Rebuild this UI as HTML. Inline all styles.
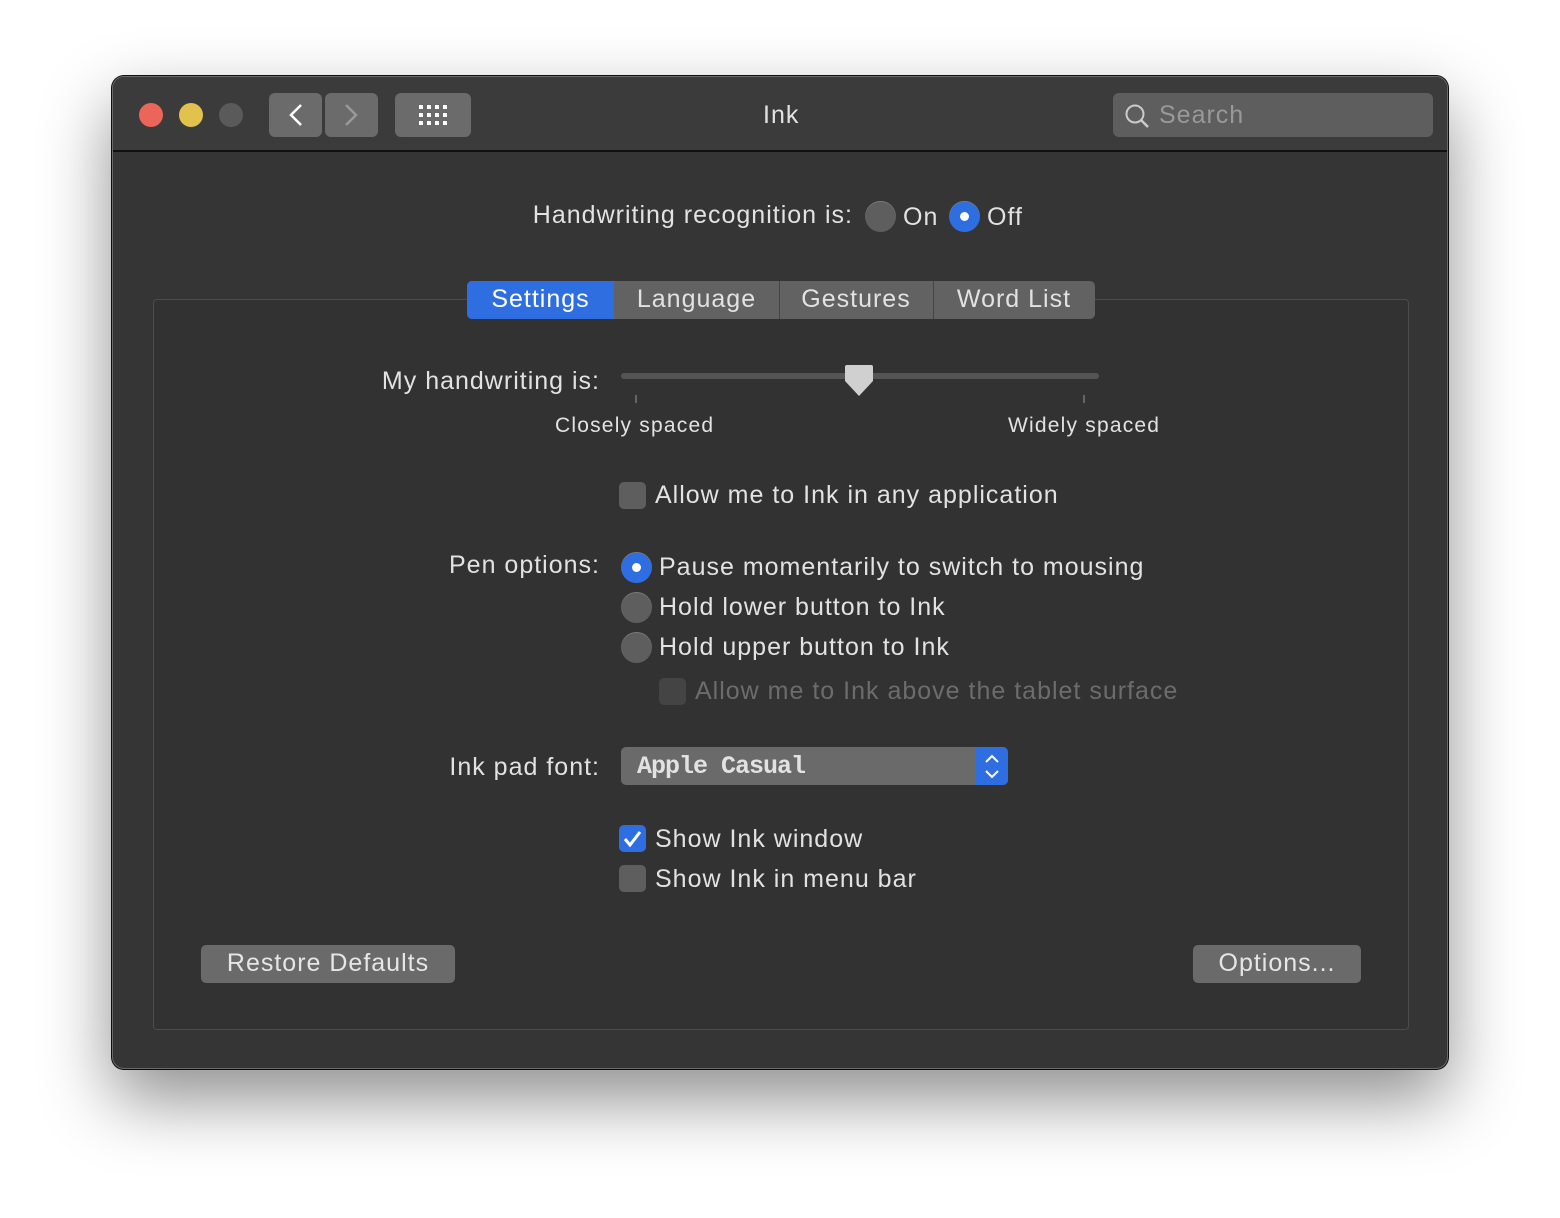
<!DOCTYPE html>
<html><head><meta charset="utf-8"><style>
*{box-sizing:border-box;margin:0;padding:0}
body{width:1560px;height:1218px;background:#fff;position:relative;font-family:"Liberation Sans",sans-serif;overflow:hidden}
.a{position:absolute}
.win{left:112px;top:76px;width:1336px;height:993px;background:#353535;border-radius:12px;border:1px solid #6a6a6a;box-shadow:0 30px 70px rgba(0,0,0,.45),0 0 0 1px #111;overflow:hidden}
.tb{left:0;top:0;width:100%;height:75px;background:#3b3b3b;border-bottom:2px solid #111}
.t{color:#e2e2e2;font-size:25px;white-space:nowrap;letter-spacing:1px}
.r{text-align:right}
.dot{width:24px;height:24px;border-radius:50%}
.btn{background:#6b6b6b;border-radius:6px}
.rad{width:31px;height:31px;border-radius:50%;background:#5e5e5e;box-shadow:inset 0 1px 0 #777}
.rad.on{background:#2f6ee0}
.rad.on::after{content:"";position:absolute;left:11px;top:11px;width:9px;height:9px;border-radius:50%;background:#fff}
.cb{width:27px;height:27px;border-radius:5px;background:#5e5e5e}
.pb{background:#6a6a6a;border-radius:5px;color:#e6e6e6;font-size:25px;text-align:center;letter-spacing:1px}
</style></head><body>
<div class="a win">
 <div class="a tb">
  <div class="a dot" style="left:26px;top:26px;background:#ec6559"></div>
  <div class="a dot" style="left:66px;top:26px;background:#e0c24c"></div>
  <div class="a dot" style="left:106px;top:26px;background:#5a5a5a"></div>
  <div class="a btn" style="left:156px;top:16px;width:53px;height:44px"><svg width="53" height="44"><path d="M32 12 L22 22 L32 32" stroke="#fff" stroke-width="2.5" fill="none"/></svg></div>
  <div class="a btn" style="left:212px;top:16px;width:53px;height:44px"><svg width="53" height="44"><path d="M21 12 L31 22 L21 32" stroke="#999" stroke-width="2.5" fill="none"/></svg></div>
  <div class="a btn" style="left:282px;top:16px;width:76px;height:44px"><svg width="76" height="44"><g fill="#fff"><rect x="24" y="12" width="4" height="4"/><rect x="32" y="12" width="4" height="4"/><rect x="40" y="12" width="4" height="4"/><rect x="48" y="12" width="4" height="4"/><rect x="24" y="20" width="4" height="4"/><rect x="32" y="20" width="4" height="4"/><rect x="40" y="20" width="4" height="4"/><rect x="48" y="20" width="4" height="4"/><rect x="24" y="28" width="4" height="4"/><rect x="32" y="28" width="4" height="4"/><rect x="40" y="28" width="4" height="4"/><rect x="48" y="28" width="4" height="4"/></g></svg></div>
  <div class="a t" style="left:650px;top:24px">Ink</div>
  <div class="a btn" style="left:1000px;top:16px;width:320px;height:44px;background:#5e5e5e"><svg class="a" style="left:10px;top:9px" width="28" height="28"><circle cx="12" cy="12" r="8.5" stroke="#ccc" stroke-width="2" fill="none"/><path d="M18 18 L25 25" stroke="#ccc" stroke-width="2.5"/></svg><div class="a t" style="left:46px;top:8px;color:#999">Search</div></div>
 </div>
 <div class="a t r" style="right:594px;top:124px">Handwriting recognition is:</div>
 <div class="a rad" style="left:752px;top:124px"></div><div class="a t" style="left:790px;top:126px">On</div>
 <div class="a rad on" style="left:836px;top:124px"></div><div class="a t" style="left:874px;top:126px">Off</div>
 <div class="a" style="left:40px;top:222px;width:1256px;height:731px;border:1px solid #4c4c4c;border-radius:4px;background:#323232"></div>
 <div class="a" style="left:354px;top:204px;width:628px;height:38px;background:#626262;border-radius:5px;overflow:hidden">
  <div class="a" style="left:0;top:0;width:147px;height:38px;background:#2f6ee0"></div>
  <div class="a" style="left:312px;top:0;width:1px;height:38px;background:#444"></div>
  <div class="a" style="left:466px;top:0;width:1px;height:38px;background:#444"></div>
  <div class="a t" style="left:0;width:147px;text-align:center;top:4px;color:#fff">Settings</div>
  <div class="a t" style="left:147px;width:165px;text-align:center;top:4px">Language</div>
  <div class="a t" style="left:312px;width:154px;text-align:center;top:4px">Gestures</div>
  <div class="a t" style="left:466px;width:162px;text-align:center;top:4px">Word List</div>
 </div>
 <div class="a t r" style="right:847px;top:290px">My handwriting is:</div>
 <div class="a" style="left:508px;top:296px;width:478px;height:6px;background:#555;border-radius:3px"></div>
 <svg class="a" style="left:730px;top:286px" width="32" height="36"><path d="M4 2 H28 Q30 2 30 4 V18 L16 33 L2 18 V4 Q2 2 4 2Z" fill="#d0d0d0"/></svg>
 <div class="a" style="left:522px;top:318px;width:2px;height:8px;background:#666"></div>
 <div class="a" style="left:970px;top:318px;width:2px;height:8px;background:#666"></div>
 <div class="a t" style="left:442px;top:337px;font-size:21px;letter-spacing:1.2px">Closely spaced</div>
 <div class="a t" style="left:895px;top:337px;font-size:21px;letter-spacing:1.2px">Widely spaced</div>
 <div class="a cb" style="left:506px;top:405px"></div><div class="a t" style="left:542px;top:404px">Allow me to Ink in any application</div>
 <div class="a t r" style="right:847px;top:474px">Pen options:</div>
 <div class="a rad on" style="left:508px;top:475px"></div><div class="a t" style="left:546px;top:476px">Pause momentarily to switch to mousing</div>
 <div class="a rad" style="left:508px;top:515px"></div><div class="a t" style="left:546px;top:516px">Hold lower button to Ink</div>
 <div class="a rad" style="left:508px;top:555px"></div><div class="a t" style="left:546px;top:556px">Hold upper button to Ink</div>
 <div class="a cb" style="left:546px;top:601px;background:#444"></div><div class="a t" style="left:582px;top:600px;color:#6c6c6c">Allow me to Ink above the tablet surface</div>
 <div class="a t r" style="right:847px;top:676px">Ink pad font:</div>
 <div class="a" style="left:508px;top:670px;width:387px;height:38px;background:#6a6a6a;border-radius:5px;overflow:hidden">
  <div class="a t" style="left:16px;top:5px;font-family:'Liberation Mono',monospace;font-weight:bold;font-size:25px;letter-spacing:-1px">Apple Casual</div>
  <div class="a" style="left:355px;top:0;width:32px;height:38px;background:#2f6ee0"><svg width="32" height="38"><path d="M10 15 L16 9 L22 15 M10 24 L16 30 L22 24" stroke="#fff" stroke-width="2" fill="none"/></svg></div>
 </div>
 <div class="a cb" style="left:506px;top:748px;background:#2f6ee0"><svg width="27" height="27"><path d="M6 14 L11 20 L21 7" stroke="#fff" stroke-width="3" fill="none"/></svg></div><div class="a t" style="left:542px;top:748px">Show Ink window</div>
 <div class="a cb" style="left:506px;top:788px"></div><div class="a t" style="left:542px;top:788px">Show Ink in menu bar</div>
 <div class="a pb" style="left:88px;top:868px;width:254px;height:38px;padding-top:4px">Restore Defaults</div>
 <div class="a pb" style="left:1080px;top:868px;width:168px;height:38px;padding-top:4px">Options...</div>
</div>
</body></html>
